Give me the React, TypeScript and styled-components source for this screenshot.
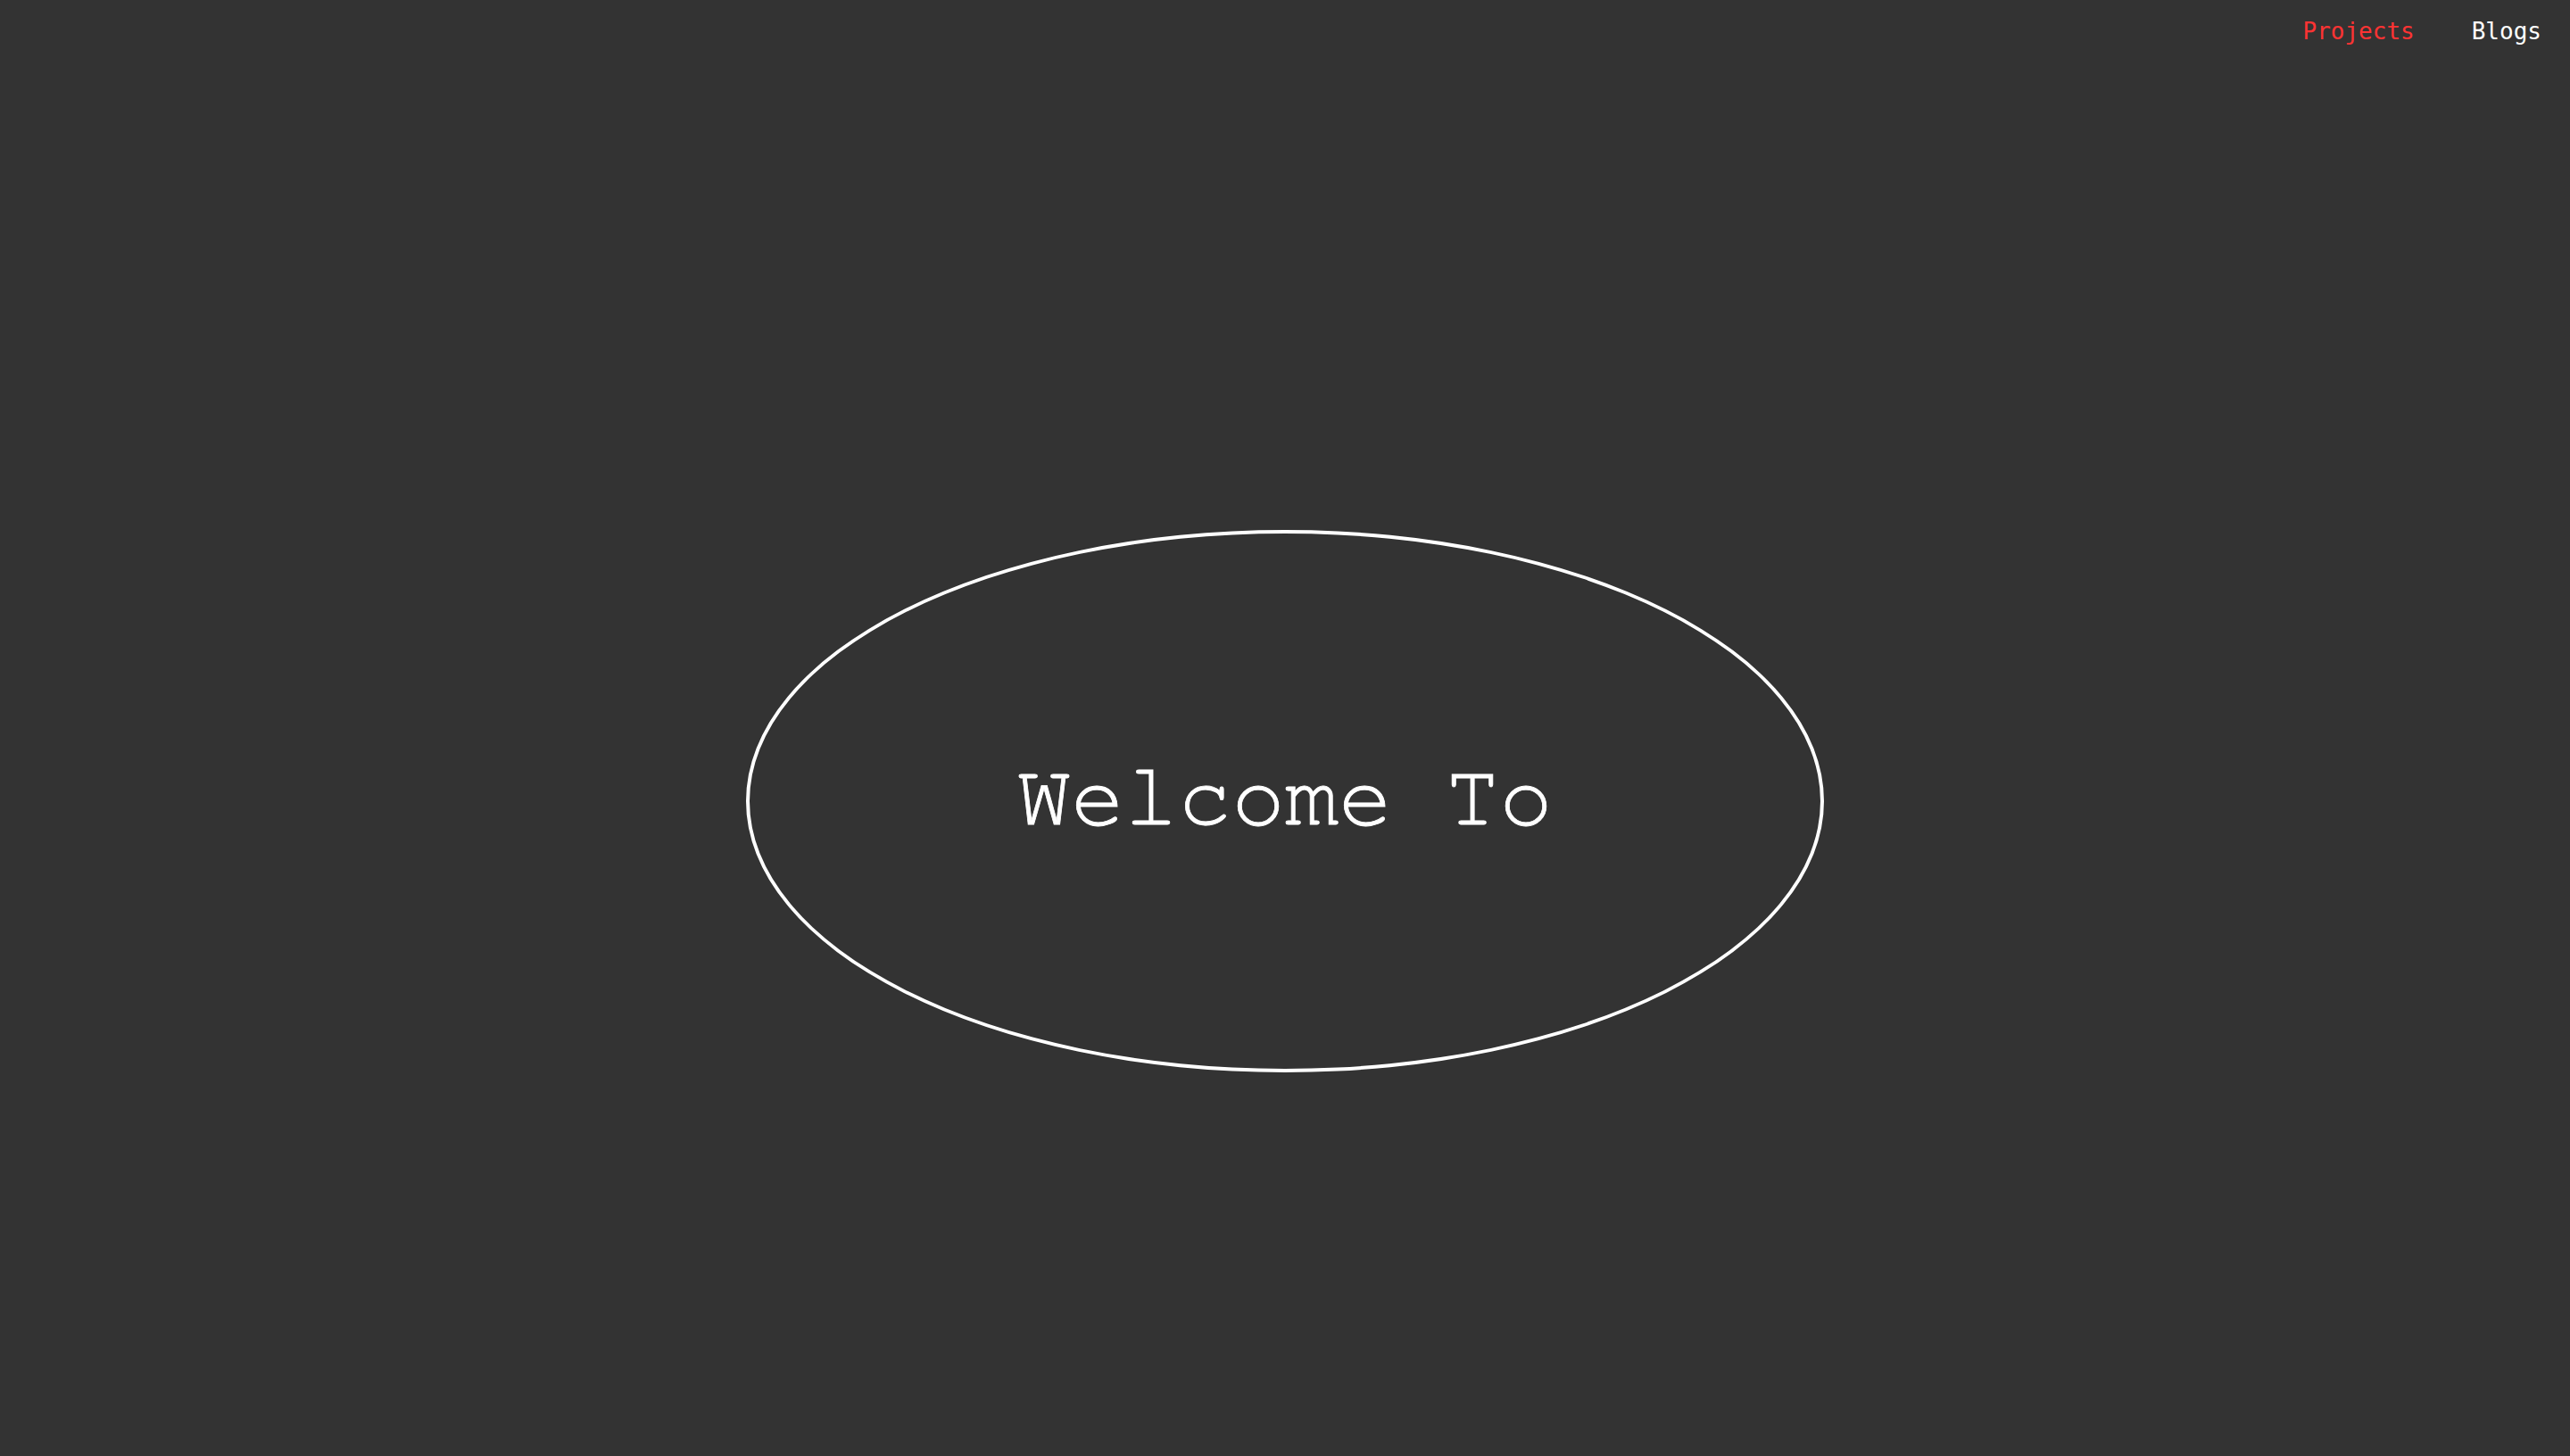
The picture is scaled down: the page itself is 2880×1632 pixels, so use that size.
import styled, { createGlobalStyle } from "styled-components";

const GlobalStyle = createGlobalStyle`
  html, body {
    margin: 0;
    padding: 0;
    background: #333333;
  }
  #root {
    min-height: 100vh;
  }
`;

const Page = styled.div`
  min-height: 100vh;
  background: #333333;
  display: flex;
  flex-direction: column;
`;

const Nav = styled.nav`
  display: flex;
  justify-content: flex-end;
  gap: 64px;
  padding: 20px 32px 18px;
`;

const NavLink = styled.a<{ $active?: boolean }>`
  font-family: "DejaVu Sans Mono", monospace;
  font-size: 26px;
  line-height: 30px;
  color: ${(p) => (p.$active ? "#ff3333" : "#ffffff")};
  text-decoration: none;
  cursor: pointer;
`;

const Main = styled.main`
  display: flex;
  justify-content: center;
  padding-top: 526px;
`;

const Oval = styled.div`
  width: 1200px;
  height: 600px;
  border: 4px solid #ffffff;
  border-radius: 50%;
  display: flex;
  align-items: center;
  justify-content: center;
`;

const Title = styled.h1`
  margin: 0 0 8px;
  font-family: "Nimbus Mono PS", "Nimbus Mono L", FreeMono, Courier, "Courier New", monospace;
  font-weight: 400;
  font-size: 100px;
  color: #ffffff;
  -webkit-text-stroke: 0.8px #ffffff;
  white-space: pre;
`;

export default function App() {
  return (
    <Page>
      <GlobalStyle />
      <Nav>
        <NavLink $active>Projects</NavLink>
        <NavLink>Blogs</NavLink>
      </Nav>
      <Main>
        <Oval>
          <Title>Welcome To</Title>
        </Oval>
      </Main>
    </Page>
  );
}
